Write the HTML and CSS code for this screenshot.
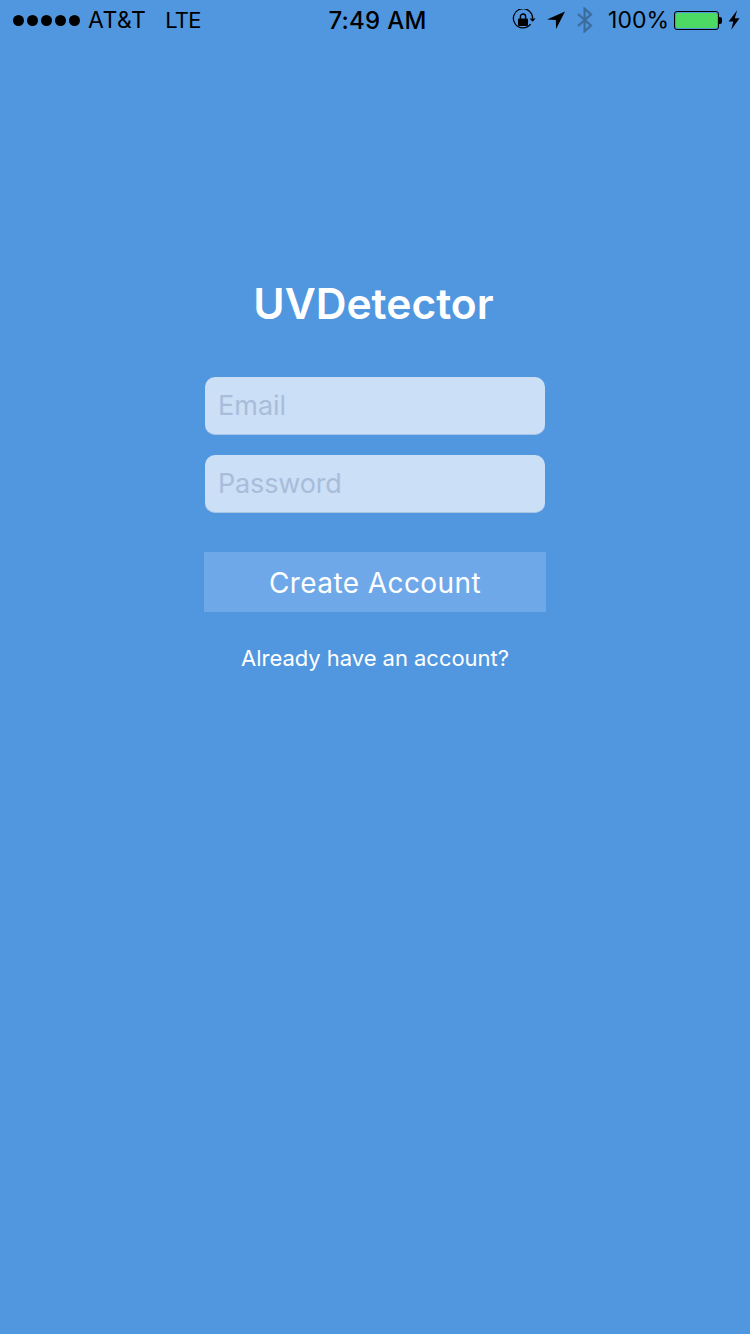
FILE: index.html
```html
<!DOCTYPE html>
<html lang="en">
<head>
<meta charset="utf-8">
<title>UVDetector</title>
<link rel="stylesheet" href="styles.css">
</head>
<body>
<div class="screen">
  <header class="status">
    <div class="status-left">
      <div class="signal"><i></i><i></i><i></i><i></i><i></i></div>
      <span class="carrier">AT&amp;T</span>
      <span class="network">LTE</span>
    </div>
    <div class="status-time">7:49 AM</div>
    <div class="status-right">
      <svg class="ic-lock" width="24" height="22" viewBox="0 0 24 22">
        <path d="M18.6 15.2A9.6 9.6 0 1 1 20.6 9.6" fill="none" stroke="#000" stroke-width="1.3"/>
        <path d="M17.6 9.4h6l-3 3.4z" fill="#000"/>
        <rect x="6" y="9.6" width="10" height="7.4" rx="1" fill="#000"/>
        <path d="M8.4 9.8V7.6a2.6 2.6 0 0 1 5.2 0v2.2" fill="none" stroke="#000" stroke-width="1.4"/>
      </svg>
      <svg class="ic-loc" width="18" height="18" viewBox="0 0 18 18">
        <path d="M18 0.5L0 8.4l8.8 0.7 0.3 8.9z" fill="#000"/>
      </svg>
      <svg class="ic-bt" width="16" height="26" viewBox="0 0 16 26">
        <path d="M1 7l13 11.6L7.6 24.4V1.6l6.4 5.8L1 19" fill="none" stroke="#3d6c9c" stroke-width="2.2"/>
      </svg>
      <span class="battery-pct">100%</span>
      <div class="battery"><div class="battery-fill"></div></div>
      <div class="battery-tip"></div>
      <svg class="ic-bolt" width="12" height="20" viewBox="0 0 11 18">
        <path d="M8.4 0L0.6 10.4h4.2L3 18l7.6-10.6H6.2z" fill="#000"/>
      </svg>
    </div>
  </header>
  <main class="form">
    <h1 class="title">UVDetector</h1>
    <div class="field"><span class="placeholder">Email</span></div>
    <div class="field"><span class="placeholder placeholder-tight">Password</span></div>
    <div class="button"><span class="button-label">Create Account</span></div>
    <div class="link">Already have an account?</div>
  </main>
</div>
</body>
</html>
```
FILE: styles.css
```css
* { box-sizing: border-box; }
html, body { margin: 0; padding: 0; }
body {
  width: 750px;
  height: 1334px;
  overflow: hidden;
  background: #5197e0;
  font-family: Inter, "Liberation Sans", sans-serif;
}
.screen {
  display: flex;
  flex-direction: column;
  height: 1334px;
}
.status {
  height: 40px;
  display: grid;
  grid-template-columns: 1fr auto 1fr;
  align-items: center;
  padding: 0 10px 0 13px;
  color: #000;
  font-size: 23px;
}
.status-left { display: flex; align-items: center; }
.signal { display: flex; gap: 3px; margin-right: 8px; }
.signal i {
  display: block;
  width: 11px;
  height: 11px;
  border-radius: 50%;
  background: #000;
}
.carrier { margin-right: 19px; letter-spacing: 0.5px; }
.network { font-size: 22px; letter-spacing: -0.8px; }
.status-time { font-weight: 500; font-size: 24px; letter-spacing: 0.25px; padding-left: 2px; }
.status-right { display: flex; align-items: center; justify-content: flex-end; }
.ic-lock { margin-right: 11px; }
.ic-loc { margin-right: 12px; }
.ic-bt { margin-right: 15px; }
.battery-pct { margin-right: 5px; }
.battery {
  width: 45px;
  height: 19px;
  border: 1px solid #000;
  border-radius: 3px;
  padding: 1px;
}
.battery-fill {
  height: 100%;
  background: #4cd964;
  border-radius: 2px;
}
.battery-tip {
  width: 3px;
  height: 7px;
  background: #000;
  border-radius: 0 2px 2px 0;
  margin-right: 6px;
}
.form {
  display: flex;
  flex-direction: column;
  align-items: center;
  padding-top: 236px;
}
.title {
  margin: 0 0 46px;
  padding-right: 3px;
  height: 55px;
  line-height: 55px;
  font-size: 42.6px;
  font-weight: 560;
  color: #fff;
}
.field {
  width: 340px;
  height: 58px;
  margin-bottom: 20px;
  padding-left: 13px;
  display: flex;
  align-items: center;
  background: #cbdff7;
  border-radius: 10px;
  border-bottom: 1px solid #a9c5e6;
}
.placeholder {
  font-size: 27px;
  color: #a8bdd9;
}
.placeholder-tight { letter-spacing: -0.15px; }
.button {
  width: 342px;
  height: 60px;
  margin-top: 19px;
  padding-top: 2px;
  display: flex;
  align-items: center;
  justify-content: center;
  background: #6ea8e8;
  color: #fff;
  font-size: 28px;
}
.button-label { letter-spacing: 0.42px; }
.link {
  margin-top: 31px;
  color: #fff;
  font-size: 22px;
  line-height: 30px;
  letter-spacing: -0.03px;
}
```
